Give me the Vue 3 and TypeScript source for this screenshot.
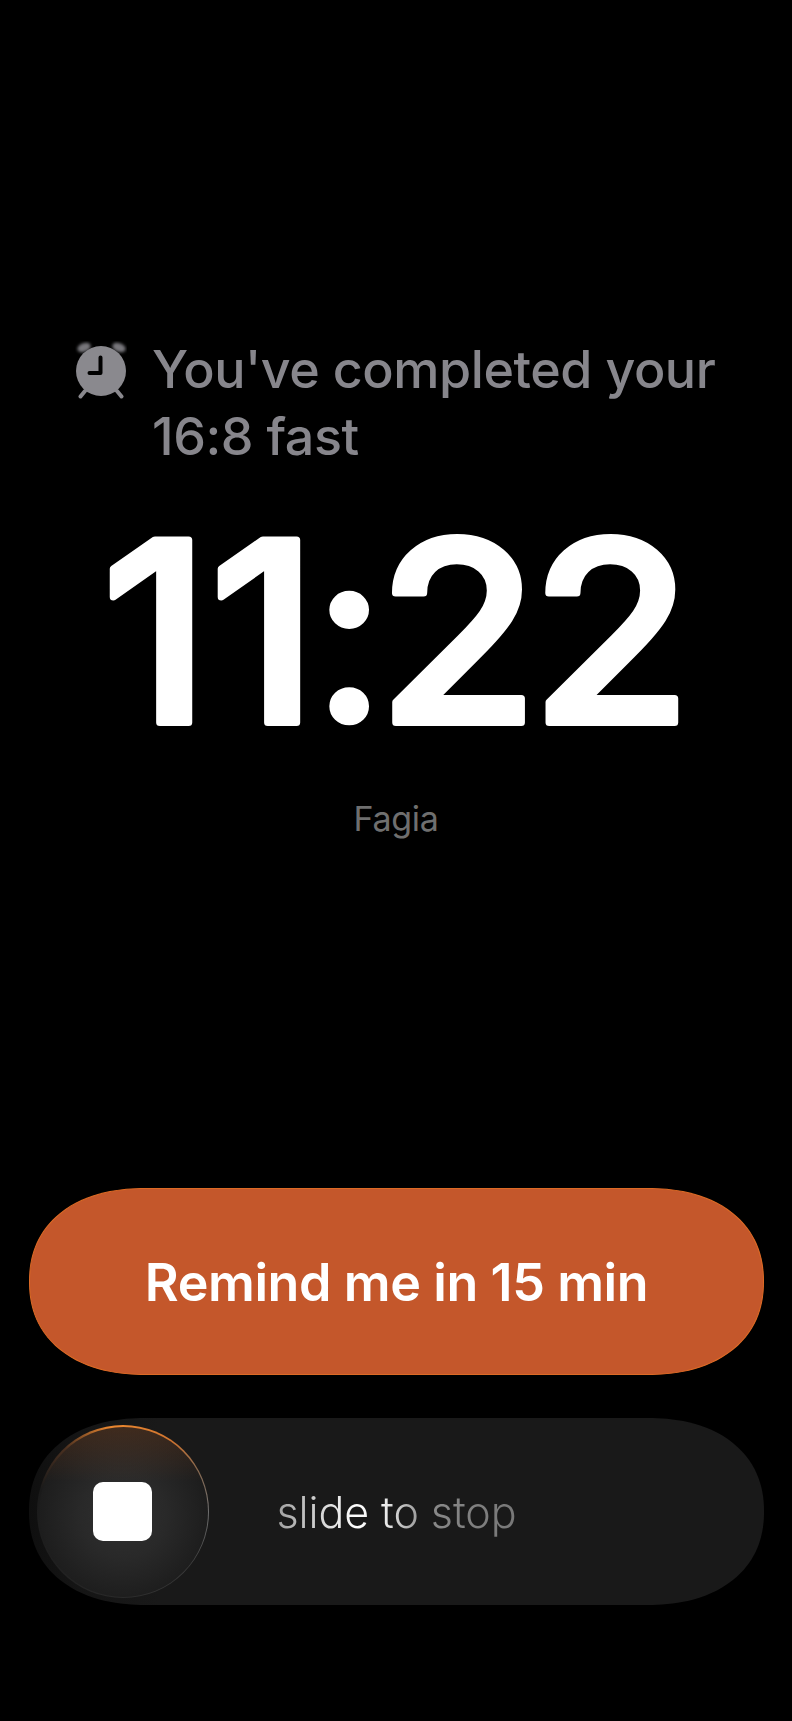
<script setup lang="ts">
const title: string = "You've completed your 16:8 fast";
const time: string = '11:22';
const label: string = 'Fagia';
</script>

<template>
  <main class="screen">
    <header class="notice">
      <svg class="bell" viewBox="0 0 52 58" aria-hidden="true">
        <g class="ears">
          <ellipse cx="9" cy="6.500" rx="7" ry="4.400" transform="rotate(-22 9 6.500)" />
          <ellipse cx="44" cy="6.500" rx="7" ry="4.400" transform="rotate(22 44 6.500)" />
        </g>
        <circle class="body" cx="26" cy="30" r="25" />
        <path class="leg" d="M10 50 5.500 55.500M42 50l4.500 5.500" />
        <path class="hands" d="M25.500 16.500v15.500h-11" />
      </svg>
      <h1 class="title">{{ title }}</h1>
    </header>

    <svg class="clock" viewBox="0 0 792 264" role="img" :aria-label="time">
      <text class="clock-text" y="223.500" transform="scale(1.04 1)"><tspan x="97.400 201.200">11</tspan><tspan class="colon" x="297.700">:</tspan><tspan x="363 510.400">22</tspan></text>
    </svg>
    <p class="label">{{ label }}</p>

    <section class="actions">
      <button class="remind" type="button">Remind me in 15 min</button>
      <div class="track">
        <div class="knob-rim">
          <div class="knob">
            <span class="stop"></span>
          </div>
        </div>
        <span class="slide">slide to stop</span>
      </div>
    </section>
  </main>
</template>

<style scoped>
.screen {
  box-sizing: border-box;
  height: 1721px;
  padding: 337px 0 116px;
  display: flex;
  flex-direction: column;
  background: #000;
  font-family: Inter, "Liberation Sans", sans-serif;
  overflow: hidden;
}
.notice {
  display: flex;
  align-items: flex-start;
  gap: 25px;
  padding-left: 75px;
}
.bell {
  flex: none;
  width: 52px;
  height: 58px;
  margin-top: 4px;
}
.ears {
  fill: #77767b;
  filter: blur(1.500px);
}
.body {
  fill: #8a898e;
}
.leg {
  fill: none;
  stroke: #8a898e;
  stroke-width: 4px;
  stroke-linecap: round;
}
.hands {
  fill: none;
  stroke: #000;
  stroke-width: 4px;
  stroke-linecap: round;
  stroke-linejoin: round;
}
.title {
  margin: 0;
  width: 600px;
  font-size: 52px;
  line-height: 66.500px;
  font-weight: 500;
  letter-spacing: -0.450px;
  color: #87868c;
}
.clock {
  display: block;
  flex: none;
  margin-top: 29px;
  width: 792px;
  height: 264px;
}
.clock-text {
  font-size: 251px;
  font-weight: 500;
  fill: #fff;
  stroke: #fff;
  stroke-width: 7px;
  stroke-linejoin: round;
}
.colon {
  stroke-width: 2px;
}
.label {
  margin: 36px 0 0;
  text-align: center;
  font-size: 34px;
  line-height: 40px;
  letter-spacing: -0.300px;
  color: #6f6f6f;
}
.actions {
  margin: auto 28px 0 29px;
  display: flex;
  flex-direction: column;
  gap: 43px;
}
.remind,
.track {
  height: 187px;
  border-radius: 116px / 93px;
  corner-shape: superellipse(1.15);
}
.remind {
  border: 1.500px solid #dc6a25;
  background: #c4572b;
  color: #fff;
  font-family: inherit;
  font-size: 52px;
  font-weight: 600;
  letter-spacing: -0.400px;
  padding: 2px 0 0;
}
.track {
  display: grid;
  align-items: center;
  background: linear-gradient(90deg, #0f0f0f 0, #151515 50px, #191919 130px);
}
.knob-rim {
  grid-area: 1 / 1;
  justify-self: start;
  box-sizing: border-box;
  width: 172px;
  height: 173px;
  margin-left: 8px;
  padding: 1.500px;
  border-radius: 50%;
  background: conic-gradient(
    from 0deg,
    #e8852f 0deg,
    #cf7430 35deg,
    #8a6a50 60deg,
    #707070 90deg,
    #3c3c3c 130deg,
    #2a2a2a 180deg,
    #1f1f1f 240deg,
    #1a1a1a 285deg,
    #4a3020 318deg,
    #e8852f 350deg
  );
}
.knob {
  width: 100%;
  height: 100%;
  display: flex;
  align-items: center;
  justify-content: center;
  border-radius: 50%;
  background:
    linear-gradient(180deg, rgba(190, 95, 35, 0.22) 0, rgba(190, 95, 35, 0) 32%),
    radial-gradient(circle at 50% 52%, #303030 0, #292929 35%, #1c1c1c 72%, #181818 100%);
}
.stop {
  width: 59px;
  height: 59px;
  margin-right: 2px;
  border-radius: 10px;
  background: #fff;
}
.slide {
  grid-area: 1 / 1;
  justify-self: center;
  font-size: 43px;
  font-weight: 350;
  letter-spacing: -0.100px;
  line-height: 52px;
  background: linear-gradient(90deg, #a0a0a0 0, #ffffff 33%, #ececec 45%, #8a8a8a 62%, #777 100%);
  -webkit-background-clip: text;
  background-clip: text;
  color: transparent;
}
</style>

<style>
html,
body {
  margin: 0;
  background: #000;
}
</style>
